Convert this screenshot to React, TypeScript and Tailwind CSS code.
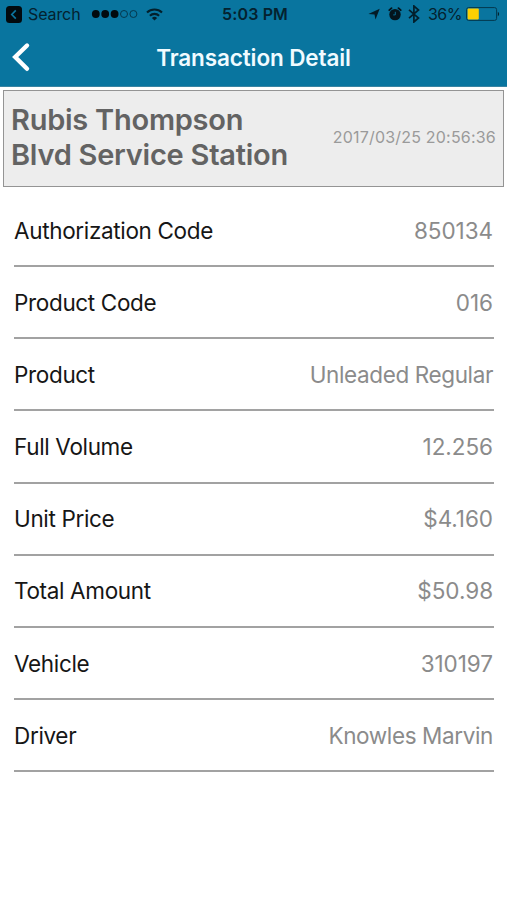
import type { ReactNode } from "react";
import clsx from "clsx";

const details = [
  { label: "Authorization Code", value: "850134", numeric: true },
  { label: "Product Code", value: "016", numeric: true },
  { label: "Product", value: "Unleaded Regular" },
  { label: "Full Volume", value: "12.256", numeric: true },
  { label: "Unit Price", value: "$4.160", numeric: true },
  { label: "Total Amount", value: "$50.98", numeric: true },
  { label: "Vehicle", value: "310197", numeric: true },
  { label: "Driver", value: "Knowles Marvin" },
];

function StatusBar() {
  return (
    <div className="grid h-7 grid-cols-[1fr_auto_1fr] items-center pl-[6px] pr-[7px] text-[#04222f]">
      <div className="flex items-center">
        <svg width="16" height="17" viewBox="0 0 16 17">
          <rect width="16" height="17" rx="3.5" fill="#020a0e" />
          <path d="M9.8 4.4 5.8 8.5l4 4.1" fill="none" stroke="#0b759f" strokeWidth="1.7" />
        </svg>
        <span className="ml-[6px] w-[53px] text-[16px] tracking-[-0.1px]">Search</span>
        <svg className="ml-[10px]" width="48" height="10" viewBox="0 0 48 10" fill="#020a0e">
          <circle cx="4.8" cy="5" r="3.9" />
          <circle cx="14.2" cy="5" r="3.9" />
          <circle cx="23.6" cy="5" r="3.9" />
          <circle cx="33" cy="5" r="3.5" fill="none" stroke="#04384e" strokeWidth="1" />
          <circle cx="42.4" cy="5" r="3.5" fill="none" stroke="#04384e" strokeWidth="1" />
        </svg>
        <svg className="ml-[7px]" width="17" height="13" viewBox="0 0 17 13" fill="none" stroke="#03202c" strokeWidth="2.1">
          <path d="M1 4.6a10.8 10.8 0 0 1 15 0" />
          <path d="M3.9 7.7a6.7 6.7 0 0 1 9.2 0" />
          <path d="M8.5 12.6 5.9 10a3.8 3.8 0 0 1 5.2 0Z" fill="#03202c" stroke="none" />
        </svg>
      </div>

      <span className="relative left-[2px] text-[16px] font-semibold tracking-[0.15px]">5:03 PM</span>

      <div className="flex items-center justify-end">
        <svg width="12" height="12" viewBox="0 0 12 12" fill="#031b26">
          <path d="M11.7.7 7.5 11.6 6.5 6.5.4 6.1Z" />
        </svg>
        <svg className="ml-[8px]" width="14" height="14" viewBox="0 0 14 14">
          <circle cx="7" cy="7.6" r="5.7" fill="#03141c" />
          <path d="M1.3 3.2 3.5 1.2M12.7 3.2 10.5 1.2" stroke="#03141c" strokeWidth="1.8" strokeLinecap="round" />
          <path d="M7.3 4.8v3.1H5.2" fill="none" stroke="#0b759f" strokeWidth="0.9" />
        </svg>
        <svg className="ml-[6px]" width="12" height="18" viewBox="0 0 12 18" fill="none" stroke="#03202c" strokeWidth="1.7">
          <path d="m1 4.8 9.5 8.2-4.6 4V1l4.6 4L1 13.2" />
        </svg>
        <span className="ml-[8px] text-[16px] tracking-[-0.5px]">36%</span>
        <svg className="ml-[4px]" width="34" height="14" viewBox="0 0 34 14">
          <rect x=".6" y=".6" width="30" height="12.8" rx="2" fill="none" stroke="#04384e" />
          <rect x="1.6" y="1.6" width="11.2" height="10.8" rx=".8" fill="#fbd003" />
          <path d="M31.8 4.8c1.8.7 1.8 3.7 0 4.4Z" fill="#03202c" />
        </svg>
      </div>
    </div>
  );
}

function DetailRow({ label, numeric, children }: { label: string; numeric?: boolean; children: ReactNode }) {
  return (
    <div className="flex h-[72.15px] items-center justify-between border-b-2 border-[#a2a2a2] pr-px pt-px">
      <span className="text-[22.5px] tracking-[-0.34px] text-[#161616]">{label}</span>
      <span className={clsx("text-[22.5px] text-[#8b8b8b]", numeric ? "tracking-[-0.05px]" : "tracking-[-0.38px]")}>
        {children}
      </span>
    </div>
  );
}

export default function App() {
  return (
    <div className="h-[900px] w-[507px] overflow-hidden bg-white font-['Inter',sans-serif]">
      <header className="h-[87px] border-b border-[#3a84a2] bg-[#09759f]">
        <StatusBar />
        <div className="relative flex h-[58px] items-center justify-center pt-px">
          <svg
            className="absolute left-[11px] top-[14px]"
            width="20"
            height="30"
            viewBox="0 0 20 30"
            fill="none"
            stroke="#fff"
            strokeWidth="4.4"
            strokeLinecap="round"
          >
            <path d="M16 3.5 4.2 15 16 26.8" />
          </svg>
          <h1 className="text-[22.5px] font-semibold tracking-[-0.12px] text-[#f0fbff]">Transaction Detail</h1>
        </div>
      </header>

      {/* Station card */}
      <section className="mx-[3px] mt-[3px] flex h-[97px] items-center justify-between border border-[#949494] bg-[#ededed] pb-[3px] pl-[7px] pr-[7px]">
        <h2 className="text-[29px] font-semibold leading-[35px] tracking-[-0.25px] text-[#636363]">
          Rubis Thompson
          <br />
          Blvd Service Station
        </h2>
        <time className="text-[16px] tracking-[0.2px] text-[#9a9a9a]">2017/03/25 20:56:36</time>
      </section>

      <main className="ml-[14px] mr-[13px] mt-[8px]">
        {details.map((item) => (
          <DetailRow key={item.label} label={item.label} numeric={item.numeric}>
            {item.value}
          </DetailRow>
        ))}
      </main>
    </div>
  );
}
